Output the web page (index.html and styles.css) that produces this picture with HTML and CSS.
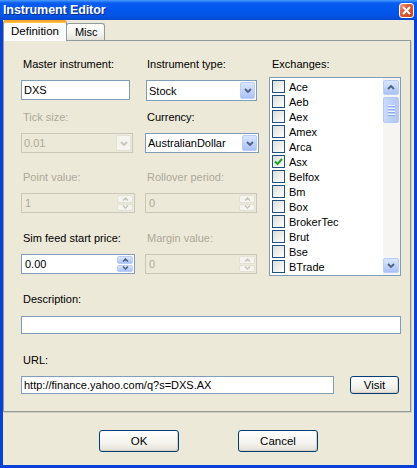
FILE: index.html
```html
<!DOCTYPE html>
<html lang="en">
<head>
  <meta charset="UTF-8" />
  <title>Instrument Editor</title>
  <link rel="stylesheet" href="styles.css">
</head>
<body>
  <div id="editor">
    <div class="caption">
      <span class="caption-text">Instrument Editor</span>
      <span class="close-btn">
        <svg width="9" height="9" viewBox="0 0 9 9"><path d="M1 1L8 8M8 1L1 8" stroke="#fff" stroke-width="2"/></svg>
      </span>
    </div>

    <div class="frame">
      <div class="tabs">
        <div class="tab active">Definition</div>
        <div class="tab">Misc</div>
      </div>

      <div class="panel">
        <div class="fields">
          <div class="field">
            <div class="label">Master instrument:</div>
            <div class="text short"><span>DXS</span></div>
          </div>
          <div class="field">
            <div class="label">Instrument type:</div>
            <div class="combo type">
              <span class="value">Stock</span>
              <span class="drop"><svg width="8" height="5" viewBox="0 0 8 5"><path d="M1 1L4 4L7 1" fill="none" stroke="#4d6185" stroke-width="1.8"/></svg></span>
            </div>
          </div>

          <div class="field exchanges">
            <div class="label">Exchanges:</div>
            <div class="list">
              <div class="items">
                <div class="item"><span class="check"></span>Ace</div>
                <div class="item"><span class="check"></span>Aeb</div>
                <div class="item"><span class="check"></span>Aex</div>
                <div class="item"><span class="check"></span>Amex</div>
                <div class="item"><span class="check"></span>Arca</div>
                <div class="item"><span class="check"><svg width="11" height="11" viewBox="0 0 11 11"><path d="M2 5.5L4.5 8L9 3" fill="none" stroke="#21a121" stroke-width="2"/></svg></span>Asx</div>
                <div class="item"><span class="check"></span>Belfox</div>
                <div class="item"><span class="check"></span>Bm</div>
                <div class="item"><span class="check"></span>Box</div>
                <div class="item"><span class="check"></span>BrokerTec</div>
                <div class="item"><span class="check"></span>Brut</div>
                <div class="item"><span class="check"></span>Bse</div>
                <div class="item"><span class="check"></span>BTrade</div>
              </div>
              <div class="scrollbar">
                <div class="sb-btn"><svg width="8" height="5" viewBox="0 0 8 5"><path d="M1 4L4 1L7 4" fill="none" stroke="#4d6185" stroke-width="1.8"/></svg></div>
                <div class="sb-thumb"><span></span><span></span><span></span><span></span></div>
                <div class="sb-track"></div>
                <div class="sb-btn"><svg width="8" height="5" viewBox="0 0 8 5"><path d="M1 1L4 4L7 1" fill="none" stroke="#4d6185" stroke-width="1.8"/></svg></div>
              </div>
            </div>
          </div>

          <div class="field disabled">
            <div class="label">Tick size:</div>
            <div class="combo">
              <span class="value">0.01</span>
              <span class="drop"><svg width="8" height="5" viewBox="0 0 8 5"><path d="M1 1L4 4L7 1" fill="none" stroke="#c9c7ba" stroke-width="1.8"/></svg></span>
            </div>
          </div>
          <div class="field">
            <div class="label">Currency:</div>
            <div class="combo">
              <span class="value">AustralianDollar</span>
              <span class="drop"><svg width="8" height="5" viewBox="0 0 8 5"><path d="M1 1L4 4L7 1" fill="none" stroke="#4d6185" stroke-width="1.8"/></svg></span>
            </div>
          </div>

          <div class="field disabled">
            <div class="label">Point value:</div>
            <div class="spin">
              <span class="value">1</span>
              <span class="arrows">
                <span class="arrow"><svg width="7" height="4" viewBox="0 0 7 4"><path d="M1 3.5L3.5 1L6 3.5" fill="none" stroke="#c9c7ba" stroke-width="1.5"/></svg></span>
                <span class="arrow"><svg width="7" height="4" viewBox="0 0 7 4"><path d="M1 0.5L3.5 3L6 0.5" fill="none" stroke="#c9c7ba" stroke-width="1.5"/></svg></span>
              </span>
            </div>
          </div>
          <div class="field disabled">
            <div class="label">Rollover period:</div>
            <div class="spin">
              <span class="value">0</span>
              <span class="arrows">
                <span class="arrow"><svg width="7" height="4" viewBox="0 0 7 4"><path d="M1 3.5L3.5 1L6 3.5" fill="none" stroke="#c9c7ba" stroke-width="1.5"/></svg></span>
                <span class="arrow"><svg width="7" height="4" viewBox="0 0 7 4"><path d="M1 0.5L3.5 3L6 0.5" fill="none" stroke="#c9c7ba" stroke-width="1.5"/></svg></span>
              </span>
            </div>
          </div>

          <div class="field">
            <div class="label">Sim feed start price:</div>
            <div class="spin">
              <span class="value">0.00</span>
              <span class="arrows">
                <span class="arrow"><svg width="7" height="4" viewBox="0 0 7 4"><path d="M1 3.5L3.5 1L6 3.5" fill="none" stroke="#4d6185" stroke-width="1.5"/></svg></span>
                <span class="arrow"><svg width="7" height="4" viewBox="0 0 7 4"><path d="M1 0.5L3.5 3L6 0.5" fill="none" stroke="#4d6185" stroke-width="1.5"/></svg></span>
              </span>
            </div>
          </div>
          <div class="field disabled">
            <div class="label">Margin value:</div>
            <div class="spin">
              <span class="value">0</span>
              <span class="arrows">
                <span class="arrow"><svg width="7" height="4" viewBox="0 0 7 4"><path d="M1 3.5L3.5 1L6 3.5" fill="none" stroke="#c9c7ba" stroke-width="1.5"/></svg></span>
                <span class="arrow"><svg width="7" height="4" viewBox="0 0 7 4"><path d="M1 0.5L3.5 3L6 0.5" fill="none" stroke="#c9c7ba" stroke-width="1.5"/></svg></span>
              </span>
            </div>
          </div>
        </div>

        <div class="field desc">
          <div class="label">Description:</div>
          <div class="text thin"></div>
        </div>

        <div class="field url">
          <div class="label">URL:</div>
          <div class="url-row">
            <div class="text thin url-box"><span>http://finance.yahoo.com/q?s=DXS.AX</span></div>
            <div class="btn visit">Visit</div>
          </div>
        </div>
      </div>

      <div class="actions">
        <div class="btn">OK</div>
        <div class="btn">Cancel</div>
      </div>
    </div>
  </div>
</body>
</html>
```

FILE: styles.css
```css
body { margin:0; background:#ece9d8; font-family:"Liberation Sans", Arial, sans-serif; font-size:11px; color:#000; }
#editor { width:417px; height:468px; display:flex; flex-direction:column; }

/* caption */
.caption {
  height:20px; flex:none; display:flex; align-items:center; justify-content:space-between;
  padding:0 3px 0 3px;
  background:linear-gradient(#4a9cff 0, #0a5cf0 3px, #0058ee 45%, #0453e4 80%, #0648cc 100%);
}
.caption-text { color:#fff; font-weight:bold; font-size:12.5px; letter-spacing:-0.1px; text-shadow:1px 1px 0 #0a2a8c; }
.close-btn {
  width:13px; height:13px; display:flex; align-items:center; justify-content:center;
  border:1px solid #fff; border-radius:3px; margin-top:1px;
  background:linear-gradient(135deg, #f0a48c 0, #e2603e 35%, #cc4319 100%);
}

/* frame */
.frame {
  flex:1; display:flex; flex-direction:column;
  border:3px solid #0841d6; border-top:none; background:#ece9d8;
}

/* tabs */
.tabs { height:20px; display:flex; align-items:flex-end; }
.tab {
  height:16px; padding:0 8px; line-height:16px;
  border:1px solid #919b9c; border-bottom:none; border-radius:3px 3px 0 0;
  background:linear-gradient(#fff, #f3f3ef 60%, #e4e2da);
  margin-left:-1px;
}
.tab.active {
  height:19px; line-height:19px; padding:0 7px; margin-left:0; margin-bottom:-1px;
  background:#fcfcfe; position:relative; z-index:1;
  border-top:2px solid #f7a533; box-shadow:inset 0 1px 0 #ffc83c;
  font-size:11.5px;
}
.tab:not(.active) { width:21px; }

.panel {
  height:372px; box-sizing:border-box; margin-right:3px;
  border:1px solid #919b9c; border-right-color:#8a9597; box-shadow:1px 1px 0 #d0cdc0;
  padding:17px 9px 17px 17px;
  background:#ece9d8;
}

/* field grid */
.fields {
  display:grid;
  grid-template-columns:124px 124px 132px;
  grid-template-rows:53px 60px 61px auto;
}
.field { display:flex; flex-direction:column; }
.label { line-height:13px; margin-bottom:9px; padding-left:2px; white-space:nowrap; }
.field.disabled .label { color:#aca899; }
.exchanges { grid-column:3; grid-row:1 / span 4; }
.exchanges .label { margin-bottom:6px; padding-left:3px; }

/* text boxes */
.text {
  height:20px; box-sizing:border-box; border:1px solid #7f9db9; background:#fff;
  display:flex; align-items:center; padding-left:2px; width:380px;
}
.text.short { width:109px; }
.text.thin { height:18px; }

.combo, .spin {
  width:114px; height:20px; box-sizing:border-box; border:1px solid #7f9db9; background:#fff;
  display:flex; align-items:center; justify-content:space-between; padding:1px;
}
.fields .field:nth-child(even) .combo,
.fields .field:nth-child(odd) .spin { width:112px; }
.combo.type { height:21px; margin-left:1px; width:111px !important; }
.value { padding-left:2px; }
.combo .value { padding-left:1px; }
.drop {
  width:15px; align-self:stretch; box-sizing:border-box; display:flex; align-items:center; justify-content:center;
  border:1px solid #b9cdf7; border-radius:2px;
  background:linear-gradient(#dbe6fd, #bed1fa 60%, #a9c1f6);
}
.arrows { width:16px; align-self:stretch; display:flex; flex-direction:column; gap:1px; }
.arrow {
  flex:1; box-sizing:border-box; display:flex; align-items:center; justify-content:center;
  border:1px solid #b9cdf7; border-radius:2px;
  background:linear-gradient(#dbe6fd, #bed1fa 60%, #a9c1f6);
}
.field.disabled .combo, .field.disabled .spin { border-color:#c9c7ba; background:#ece9d8; color:#aca899; }
.field.disabled .drop, .field.disabled .arrow { border-color:#e3e1d6; background:#f5f4ef; }

/* exchanges list */
.list {
  height:199px; box-sizing:border-box; border:1px solid #7f9db9; background:#fff;
  display:flex;
}
.items { flex:1; padding:1px 0 0 2px; }
.item { height:15px; display:flex; align-items:center; gap:4px; padding-bottom:0; }
.check {
  width:13px; height:13px; box-sizing:border-box; border:1px solid #1c5180; flex:none;
  background:linear-gradient(135deg, #dcdcd7, #fff);
  display:flex; align-items:center; justify-content:center;
}
.scrollbar { width:17px; display:flex; flex-direction:column; padding-top:2px; background:#f6f5f1; }
.sb-btn {
  width:16px; height:15px; box-sizing:border-box; display:flex; align-items:center; justify-content:center;
  border:1px solid #b9cdf7; border-radius:2px;
  background:linear-gradient(#dbe6fd, #bed1fa 60%, #a9c1f6);
  margin-bottom:2px;
}
.sb-thumb {
  width:16px; height:26px; box-sizing:border-box; border:1px solid #b3c8f5; border-radius:2px;
  background:linear-gradient(90deg, #cbdafc, #bcd0fb 50%, #b3c7f7);
  display:flex; flex-direction:column; align-items:center; justify-content:center; gap:1px;
}
.sb-thumb span { width:7px; height:1px; background:#eef3fe; border-bottom:1px solid #8ca9ee; }
.sb-track { flex:1; }

/* description / url */
.desc { margin-top:17px; }
.desc .label { margin-bottom:10px; }
.url { margin-top:20px; }
.url-row { display:flex; align-items:flex-start; }
.url-box { width:313px; }

.btn {
  height:22px; box-sizing:border-box; width:80px;
  border:1px solid #003c74; border-radius:3px;
  background:linear-gradient(#fff, #f4f3ee 60%, #e3e0d4);
  box-shadow:inset -1px -1px 0 #d6d0c5;
  display:flex; align-items:center; justify-content:center; font-size:11.5px;
}
.btn.visit { width:49px; height:18px; margin-left:16px; }

.actions { display:flex; justify-content:center; gap:59px; margin-top:18px; }
```
